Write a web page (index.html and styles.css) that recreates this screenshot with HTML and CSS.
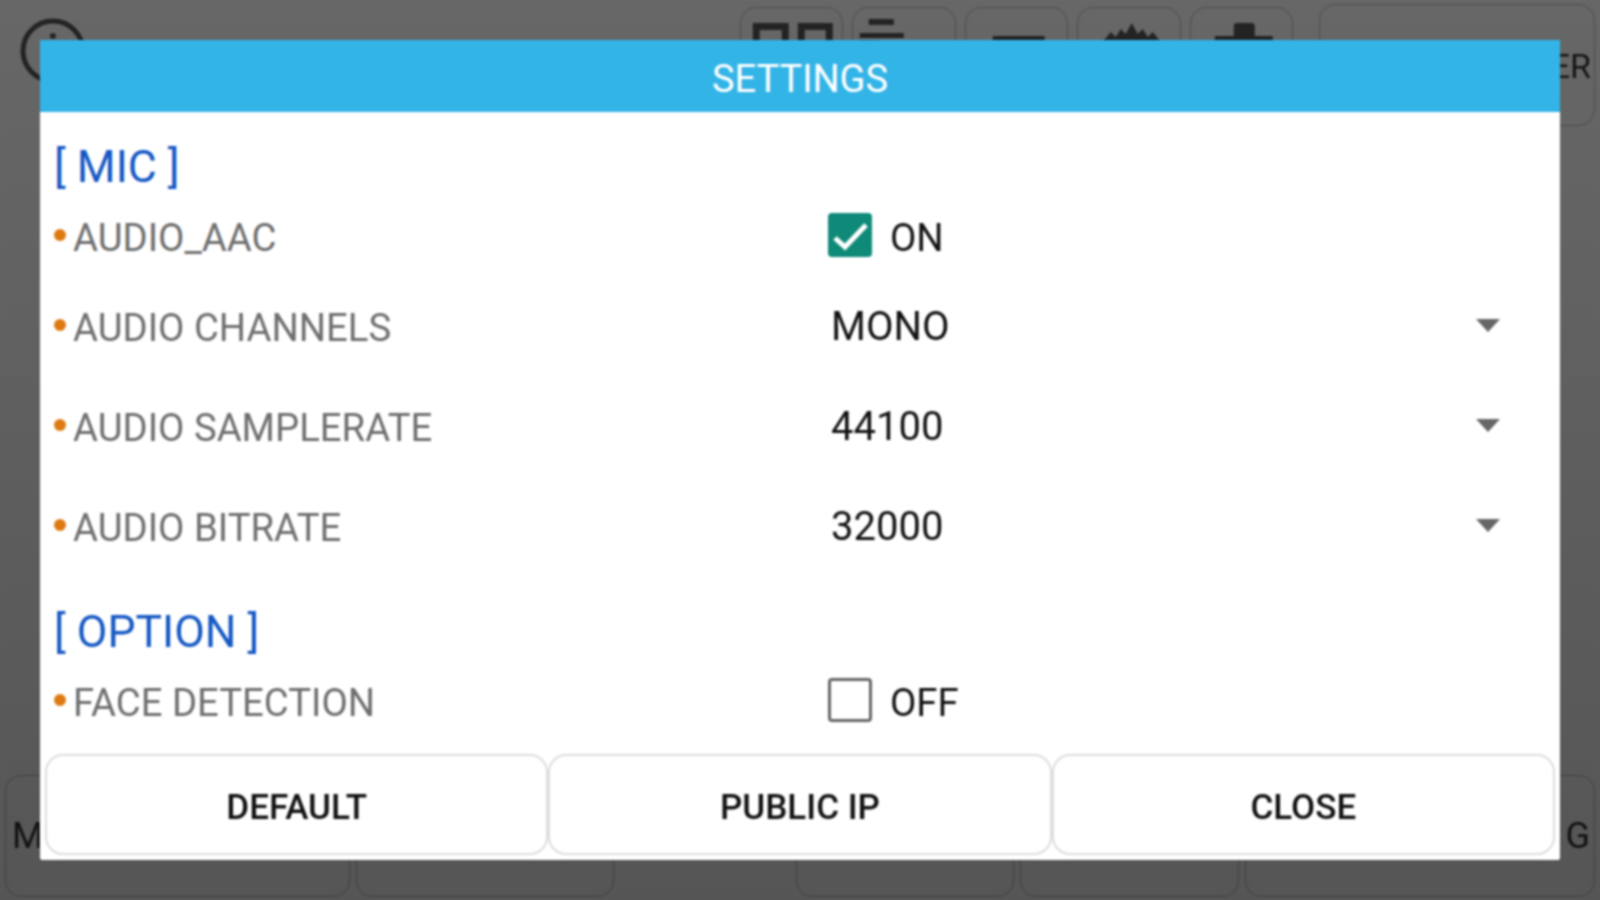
FILE: index.html
```html
<!DOCTYPE html>
<html lang="en">
<head>
<meta charset="utf-8">
<title>Settings</title>
<link rel="stylesheet" href="styles.css">
</head>
<body>
<div class="app">
  <div class="topbar">
    <svg class="clock" viewBox="0 0 66 66"><circle cx="33" cy="33" r="30" fill="none" stroke="#555" stroke-width="5"/><circle cx="33" cy="18" r="3" fill="#555"/></svg>
    <div class="tools">
      <div class="tool"><svg viewBox="0 0 100 50" class="ticon"><path d="M14.5 22.5h29v26h-29zM59.5 22.5h28v26h-28z" fill="none" stroke="#555" stroke-width="7"/></svg></div>
      <div class="tool"><svg viewBox="0 0 100 50" class="ticon"><path d="M15 15h25v6h-25zM6 29h44v5h-44zM6 37h20v6h-20z" fill="#555"/></svg></div>
      <div class="tool"><svg viewBox="0 0 100 50" class="ticon"><path d="M26 32h52v6h-52z" fill="#555"/></svg></div>
      <div class="tool"><svg viewBox="0 0 100 50" class="ticon"><path d="M24 50v-12l8-10 5 5 5-8 5 5 6-11 6 11 5-5 5 8 5-5 8 10v12z" fill="#555"/></svg></div>
      <div class="tool"><svg viewBox="0 0 100 50" class="ticon"><path d="M42 32v-10q0-3 3-3h15q3 0 3 3v10zM23 32h58v18h-58z" fill="#555"/></svg></div>
    </div>
    <div class="wide">ER</div>
  </div>
  <div class="bottombar">
    <div class="key key-a">M</div>
    <div class="key key-b"></div>
    <div class="key key-d key-gap"></div>
    <div class="key key-d"></div>
    <div class="key key-e">G</div>
  </div>
</div>
<div class="scrim"></div>
<div class="dialog">
  <div class="title">SETTINGS</div>
  <div class="body">
    <div class="section">[ MIC ]</div>
    <div class="row row-check">
      <div class="label"><span class="dot"></span>AUDIO_AAC</div>
      <div class="value"><span class="check on"><svg viewBox="0 0 44 44"><path d="M7 25l10 9 21-22" fill="none" stroke="#fff" stroke-width="5"/></svg></span><span class="state">ON</span></div>
    </div>
    <div class="row row-select row-first">
      <div class="label"><span class="dot"></span>AUDIO CHANNELS</div>
      <div class="value select"><span>MONO</span><span class="caret"></span></div>
    </div>
    <div class="row row-select">
      <div class="label"><span class="dot"></span>AUDIO SAMPLERATE</div>
      <div class="value select"><span>44100</span><span class="caret"></span></div>
    </div>
    <div class="row row-select">
      <div class="label"><span class="dot"></span>AUDIO BITRATE</div>
      <div class="value select"><span>32000</span><span class="caret"></span></div>
    </div>
    <div class="section section-option">[ OPTION ]</div>
    <div class="row row-check">
      <div class="label"><span class="dot"></span>FACE DETECTION</div>
      <div class="value"><span class="check"></span><span class="state">OFF</span></div>
    </div>
  </div>
  <div class="actions">
    <button class="action">DEFAULT</button>
    <button class="action">PUBLIC IP</button>
    <button class="action">CLOSE</button>
  </div>
</div>
</body>
</html>
```
FILE: styles.css
```css
* { box-sizing: border-box; }
html, body { margin: 0; height: 100%; }
body { width: 1600px; height: 900px; overflow: hidden; font-family: Roboto, "Liberation Sans", sans-serif; background: #fff; position: relative; }
.app { height: 900px; display: flex; flex-direction: column; justify-content: space-between; padding: 4px 5px 3px 5px; color: #333; background: #fafafa; filter: blur(.8px); }
.topbar { display: flex; align-items: flex-start; }
.clock { width: 66px; height: 66px; margin: 14px 0 0 15px; }
.tools { display: flex; gap: 9px; margin-left: 654px; padding-top: 3px; }
.tool { width: 103.5px; height: 110px; border: 1px solid #bbb; border-radius: 16px; }
.ticon { display: block; width: 100%; height: 50px; margin-top: -4px; }
.wide { width: 277px; height: 122px; margin-left: 25.5px; border: 1px solid #bbb; border-radius: 16px; font-size: 34px; line-height: 122px; text-align: right; padding-right: 3px; }
.bottombar { display: flex; gap: 6px; height: 122px; }
.key { border: 1px solid #bbb; border-radius: 16px; font-size: 36px; line-height: 120px; padding: 0 6px; }
.key-a { width: 345px; }
.key-b { width: 258px; }
.key-d { width: 219px; }
.key-gap { margin-left: 176px; }
.key-e { width: 350px; text-align: right; padding-right: 4px; }
.scrim { position: absolute; inset: 0; background: linear-gradient(rgba(0,0,0,.59), rgba(0,0,0,.66)); }
.dialog { position: absolute; left: 40px; top: 40px; width: 1520px; height: 820px; background: #fff; display: flex; flex-direction: column; border-radius: 2px; filter: blur(.8px); }
.title { height: 72px; padding-top: 2px; background: #32b4e7; color: #fff; font-size: 38px; line-height: 74px; text-align: center; }
.body { flex: 1; padding: 0 14px; }
.section { font-size: 44.5px; line-height: 50px; color: #1558c4; margin-top: 30px; }
.section-option { margin-top: 31px; }
.row { display: flex; align-items: center; font-size: 38.3px; }
.row-check { height: 50px; margin-top: 19px; }
.row-select { height: 100px; }
.row-first { margin-top: 15px; }
.label { width: 774px; padding-top: 2px; color: #6e6e6e; display: flex; align-items: center; }
.dot { width: 12px; height: 12px; border-radius: 50%; background: #dd7b12; margin: 0 7px 5px 0; }
.value { flex: 1; display: flex; align-items: center; color: #111; }
.state { display: block; padding-top: 2px; }
.select { justify-content: space-between; padding: 0 46px 0 3px; font-size: 40px; }
.caret { width: 0; height: 0; border-left: 12px solid transparent; border-right: 12px solid transparent; border-top: 13px solid #666; margin-bottom: 2px; }
.check { width: 44px; height: 44px; border: 3px solid #666; border-radius: 4px; margin: 0 18px 2px 0; display: flex; }
.check.on { background: #0f8a78; border: 0; }
.check svg { width: 44px; height: 44px; }
.actions { display: flex; padding: 0 5px 5px; }
.action { flex: 1; height: 101px; padding-top: 7px; background: #fff; border: 2px solid #ddd; border-radius: 18px; font: 500 35px Roboto, "Liberation Sans", sans-serif; color: #111; }
```
